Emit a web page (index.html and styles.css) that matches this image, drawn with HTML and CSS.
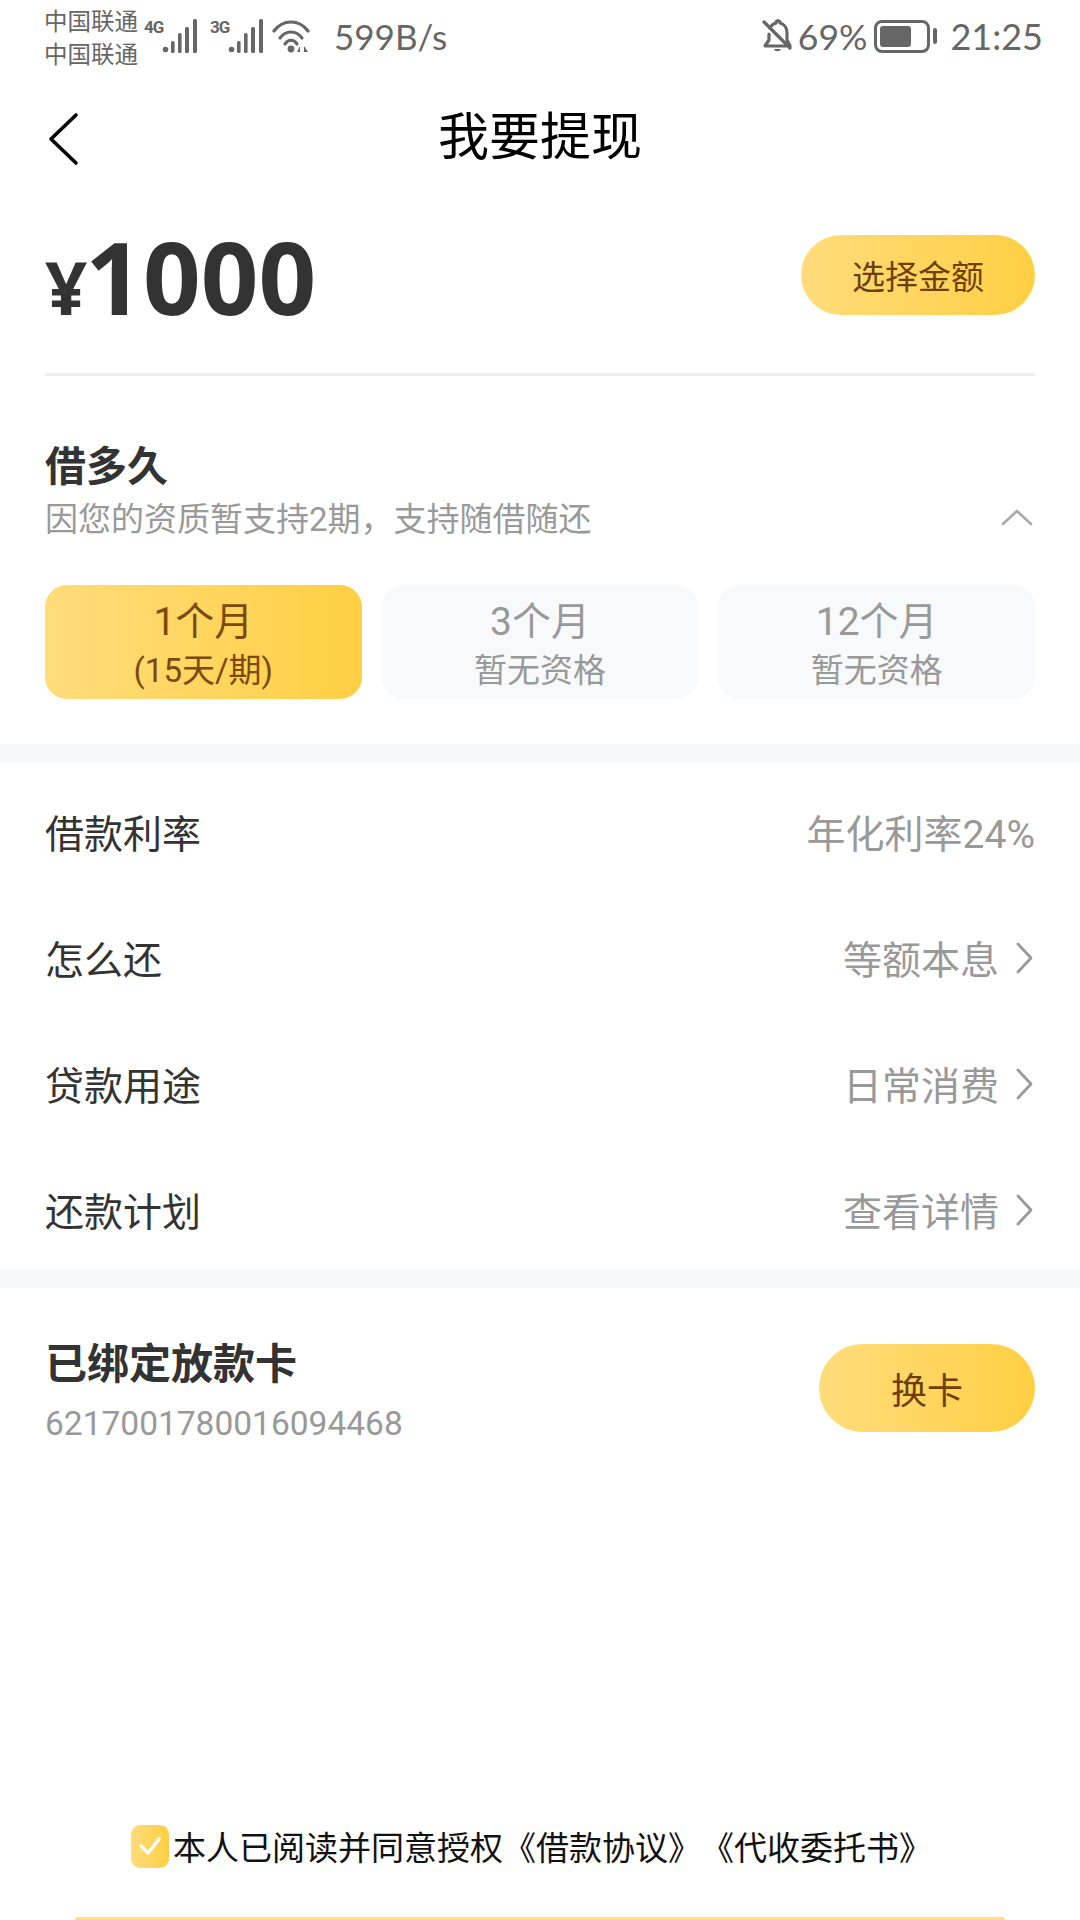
FILE: index.html
```html
<!DOCTYPE html>
<html lang="zh-CN">
<head>
  <meta charset="UTF-8">
  <title>我要提现</title>
  <link rel="stylesheet" href="styles.css">
</head>
<body>
  <div class="page">
    <!-- Status bar -->
    <div class="status-bar">
      <div class="status-left">
        <div class="carriers"><span>中国联通</span><span>中国联通</span></div>
        <div class="net"><span class="net-type">4G</span>
          <svg class="bars" width="36" height="34" viewBox="0 0 36 34"><g fill="#666"><circle cx="3.5" cy="30.5" r="2.8"/><rect x="9" y="22" width="3.6" height="12" rx="1.6"/><rect x="16" y="14" width="3.6" height="20" rx="1.6"/><rect x="23" y="8" width="4" height="26" rx="1.6"/><rect x="31" y="0" width="4" height="34" rx="1.6"/></g></svg>
        </div>
        <div class="net"><span class="net-type">3G</span>
          <svg class="bars" width="36" height="34" viewBox="0 0 36 34"><g fill="#666"><circle cx="3.5" cy="30.5" r="2.8"/><rect x="9" y="22" width="3.6" height="12" rx="1.6"/><rect x="16" y="14" width="3.6" height="20" rx="1.6"/><rect x="23" y="8" width="4" height="26" rx="1.6"/><rect x="31" y="0" width="4" height="34" rx="1.6"/></g></svg>
        </div>
        <svg class="wifi" width="40" height="34" viewBox="0 0 40 34"><g fill="none" stroke="#666" stroke-width="3.2" stroke-linecap="round"><path d="M2 12C11 0 27 0 36 12"/><path d="M8 19C14 11 24 11 30 19"/><path d="M13 25C16 20 22 20 25 25"/></g><circle cx="19" cy="30" r="3.4" fill="#666"/><path d="M28 33V27L25 33ZM32 27V33L36 33Z" fill="#666"/></svg>
        <span class="speed">599B/s</span>
      </div>
      <div class="status-right">
        <svg class="bell" width="30" height="34" viewBox="0 0 30 34"><g fill="none" stroke="#666" stroke-width="3.2" stroke-linecap="round" stroke-linejoin="round"><path d="M8 9C9 6 11 5 14 4C14 1 18 1 18 4C22 5 25 9 25 14V21L28 27"/><path d="M7 15V21L3 27H24"/><path d="M2 3L28 29"/></g><path d="M12 30h7c-1 3-6 3-7 0z" fill="#666"/></svg>
        <span class="batt-pct">69%</span>
        <div class="battery"><div class="battery-shell"><div class="battery-level"></div></div><div class="battery-nub"></div></div>
        <span class="clock">21:25</span>
      </div>
    </div>

    <!-- Title -->
    <div class="header">
      <svg class="back" width="34" height="54" viewBox="0 0 34 54"><path d="M29 3L4 27L29 51" fill="none" stroke="#000" stroke-width="3.6" stroke-linecap="round" stroke-linejoin="round"/></svg>
      <h1 class="title">我要提现</h1>
    </div>

    <!-- Amount -->
    <div class="amount-row">
      <div class="amount"><span class="currency">¥</span><span class="value">1000</span></div>
      <div class="pill pill-amount">选择金额</div>
    </div>

    <!-- Loan term -->
    <div class="term">
      <div class="term-title">借多久</div>
      <div class="term-sub">
        <span>因您的资质暂支持2期，支持随借随还</span>
        <svg width="32" height="18" viewBox="0 0 32 18"><path d="M2 16L16 3L30 16" fill="none" stroke="#aaa" stroke-width="2.6" stroke-linecap="round" stroke-linejoin="round"/></svg>
      </div>
      <div class="tabs">
        <div class="tab tab-active"><span class="tab-name">1个月</span><span class="tab-note">(15天/期)</span></div>
        <div class="tab"><span class="tab-name">3个月</span><span class="tab-note">暂无资格</span></div>
        <div class="tab"><span class="tab-name">12个月</span><span class="tab-note">暂无资格</span></div>
      </div>
    </div>

    <div class="band"></div>

    <!-- Details -->
    <div class="rows">
      <div class="row"><span class="row-label">借款利率</span><span class="row-value">年化利率24%</span></div>
      <div class="row"><span class="row-label">怎么还</span><span class="row-value">等额本息<svg class="chevron" width="18" height="32" viewBox="0 0 18 32"><path d="M2 2L15 16L2 30" fill="none" stroke="#999" stroke-width="2.8" stroke-linecap="round" stroke-linejoin="round"/></svg></span></div>
      <div class="row"><span class="row-label">贷款用途</span><span class="row-value">日常消费<svg class="chevron" width="18" height="32" viewBox="0 0 18 32"><path d="M2 2L15 16L2 30" fill="none" stroke="#999" stroke-width="2.8" stroke-linecap="round" stroke-linejoin="round"/></svg></span></div>
      <div class="row"><span class="row-label">还款计划</span><span class="row-value">查看详情<svg class="chevron" width="18" height="32" viewBox="0 0 18 32"><path d="M2 2L15 16L2 30" fill="none" stroke="#999" stroke-width="2.8" stroke-linecap="round" stroke-linejoin="round"/></svg></span></div>
    </div>

    <div class="band"></div>

    <!-- Bank card -->
    <div class="card-row">
      <div class="card-info">
        <div class="card-title">已绑定放款卡</div>
        <div class="card-number">6217001780016094468</div>
      </div>
      <div class="pill pill-card">换卡</div>
    </div>

    <div class="spacer"></div>

    <!-- Agreement, the submit button is cut off by the window -->
    <div class="agree">
      <div class="checkbox"><svg width="26" height="22" viewBox="0 0 26 22"><path d="M4 11L11 18L22 4" fill="none" stroke="#fff" stroke-width="3.6" stroke-linecap="round" stroke-linejoin="round"/></svg></div>
      <span class="agree-text">本人已阅读并同意授权《借款协议》《代收委托书》</span>
    </div>
    <div class="submit"></div>
  </div>
</body>
</html>
```

FILE: styles.css
```css
/* Reset */
html, body {
  margin: 0;
  padding: 0;
  background: #fff;
  font-family: Roboto, "Noto Sans CJK SC", sans-serif;
}
.page {
  width: 1080px;
  height: 1920px;
  overflow: hidden;
  display: flex;
  flex-direction: column;
}

/* Status bar */
.status-bar {
  height: 72px;
  flex: none;
  display: flex;
  justify-content: space-between;
  align-items: center;
  padding: 0 37px 0 44px;
  color: #666;
}
.status-left, .status-right {
  display: flex;
  align-items: center;
}
.carriers {
  display: flex;
  flex-direction: column;
  font-size: 23.5px;
  line-height: 33px;
  margin-top: 5px;
  width: 94px;
  white-space: nowrap;
}
.net {
  display: flex;
  align-items: flex-start;
  margin-left: 6px;
  height: 34px;
}
.net + .net {
  margin-left: 12px;
}
.net-type {
  font-size: 17px;
  font-weight: 700;
  line-height: 16px;
  width: 18px;
  letter-spacing: -1px;
}
.wifi {
  margin-left: 8px;
}
.speed {
  font-size: 35px;
  margin-left: 22px;
  font-family: Lato, "Noto Sans CJK SC", sans-serif;
}
.batt-pct {
  font-size: 35.5px;
  margin-left: 6px;
  font-family: Lato, sans-serif;
}
.battery {
  display: flex;
  align-items: center;
  margin-left: 7px;
}
.battery-shell {
  width: 56px;
  height: 33px;
  box-sizing: border-box;
  border: 3px solid #666;
  border-radius: 8px;
  padding: 3px;
}
.battery-level {
  width: 70%;
  height: 100%;
  background: #666;
  border-radius: 3px;
}
.battery-nub {
  width: 4px;
  height: 16px;
  margin-left: 3px;
  background: #666;
  border-radius: 2px;
}
.clock {
  font-size: 36px;
  margin-left: 13px;
  font-family: Lato, sans-serif;
}

/* Title bar */
.header {
  height: 130px;
  flex: none;
  box-sizing: border-box;
  padding-bottom: 8px;
  position: relative;
  display: flex;
  align-items: center;
  justify-content: center;
}
.back {
  position: absolute;
  left: 47px;
  top: 40px;
}
.title {
  margin: 0;
  font-size: 51px;
  font-weight: 400;
  color: #000;
}

/* Amount */
.amount-row {
  height: 174px;
  flex: none;
  box-sizing: border-box;
  margin: 0 45px;
  border-bottom: 3px solid #eee;
  display: flex;
  justify-content: space-between;
  padding-top: 29px;
}
.amount {
  font-family: "Open Sans", sans-serif;
  color: #333;
  font-weight: 700;
  line-height: 90px;
}
.currency {
  font-size: 74px;
  letter-spacing: -2px;
}
.value {
  font-size: 101px;
}
.pill {
  background: linear-gradient(90deg, #ffdc7c, #ffcf43);
  color: #6e3f08;
  display: flex;
  align-items: center;
  justify-content: center;
}
.pill-amount {
  width: 234px;
  height: 80px;
  margin-top: 4px;
  border-radius: 40px;
  font-size: 33px;
}
.pill-card {
  width: 216px;
  height: 88px;
  border-radius: 44px;
  font-size: 36px;
  margin-bottom: 11px;
}

/* Loan term */
.term {
  flex: none;
  height: 368px;
  box-sizing: border-box;
  padding: 65px 45px 0;
}
.term-title {
  font-size: 41px;
  font-weight: 700;
  color: #333;
  line-height: 52px;
}
.term-sub {
  display: flex;
  justify-content: space-between;
  align-items: center;
  font-size: 33px;
  line-height: 54px;
  color: #999;
}
.term-sub svg {
  margin: 0 2px 7px 0;
}
.tabs {
  display: flex;
  gap: 20px;
  margin-top: 38px;
}
.tab {
  flex: 1;
  height: 114px;
  box-sizing: border-box;
  padding-top: 6px;
  border-radius: 22px;
  background: #f8f9fb;
  color: #999;
  display: flex;
  flex-direction: column;
  align-items: center;
  justify-content: center;
}
.tab-active {
  background: linear-gradient(90deg, #ffdc7c, #ffcf43);
  color: #7c4a0c;
}
.tab-name {
  font-size: 39px;
  line-height: 52px;
}
.tab-note {
  font-size: 33px;
  line-height: 46px;
}

.band {
  height: 19px;
  flex: none;
  background: #f7f8fa;
}

/* Detail rows */
.rows {
  flex: none;
  height: 506px;
  box-sizing: border-box;
  padding-top: 5px;
}
.row {
  height: 126px;
  padding: 0 45px;
  display: flex;
  justify-content: space-between;
  align-items: center;
  font-size: 39px;
}
.row-label {
  color: #333;
}
.row-value {
  display: flex;
  align-items: center;
  color: #999;
}
.chevron {
  margin: 2px 1px 0 17px;
}

/* Bank card */
.card-row {
  flex: none;
  display: flex;
  justify-content: space-between;
  align-items: center;
  padding: 47px 45px 0;
}
.card-title {
  font-size: 42px;
  font-weight: 700;
  color: #333;
  line-height: 60px;
}
.card-number {
  font-size: 33.5px;
  color: #999;
  line-height: 57px;
}

.spacer {
  flex: 1;
}

/* Agreement */
.agree {
  flex: none;
  display: flex;
  align-items: center;
  justify-content: center;
  gap: 4px;
  font-size: 33px;
  color: #111;
  margin-bottom: 47px;
  padding-right: 17px;
}
.agree-text {
  text-spacing-trim: space-all;
}
.checkbox {
  width: 38px;
  height: 43px;
  border-radius: 9px;
  background: linear-gradient(90deg, #ffdc7c, #ffcf43);
  display: flex;
  align-items: center;
  justify-content: center;
}
.submit {
  flex: none;
  height: 3px;
  margin: 0 75px;
  background: #ffdf80;
  border-radius: 3px 3px 0 0;
}
```
